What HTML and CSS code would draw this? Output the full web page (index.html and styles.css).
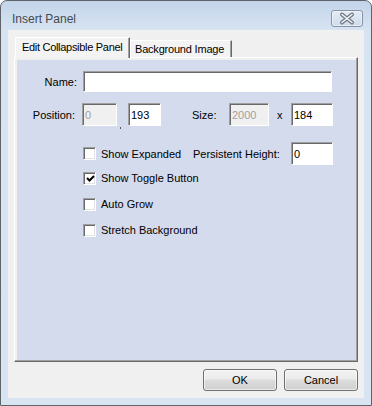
FILE: index.html
```html
<!DOCTYPE html>
<html lang="en">
<head>
  <meta charset="UTF-8">
  <title>Insert Panel</title>
  <link rel="stylesheet" href="styles.css">
</head>
<body>

  <div class="window">
    <div class="titlebar">
      <span class="title">Insert Panel</span>
      <button class="close" title="Close">
        <svg width="30" height="15" viewBox="0 0 30 15">
          <path d="M10 3.5 L20 11.5 M20 3.5 L10 11.5" stroke="#6e7785" stroke-width="4" stroke-linecap="round"/>
          <path d="M10 3.5 L20 11.5 M20 3.5 L10 11.5" stroke="#f4f6f9" stroke-width="1.6" stroke-linecap="round"/>
        </svg>
      </button>
    </div>

    <div class="client">
      <div class="tabs">
        <div class="tab active">Edit Collapsible Panel</div>
        <div class="tab">Background Image</div>
      </div>

      <div class="panel">
        <div class="row row-name">
          <label class="lbl">Name:</label>
          <input class="field name" type="text">
        </div>

        <div class="row row-pos">
          <label class="lbl lbl-pos">Position:</label>
          <input class="field pos-x" type="text" value="0" disabled>
          <span class="tick"></span>
          <input class="field pos-y" type="text" value="193">
          <label class="size-lbl">Size:</label>
          <input class="field size-w" type="text" value="2000" disabled>
          <span class="times">x</span>
          <input class="field size-h" type="text" value="184">
        </div>

        <div class="row row-check first">
          <span class="check"></span>
          <span class="check-lbl expanded">Show Expanded</span>
          <label class="persist-lbl">Persistent Height:</label>
          <input class="field persist" type="text" value="0">
        </div>

        <div class="row row-check">
          <span class="check on">
            <svg width="9" height="9" viewBox="0 0 9 9"><path d="M1 4 L3.5 6.5 L8 2" stroke="#000" stroke-width="2" fill="none"/></svg>
          </span>
          <span class="check-lbl">Show Toggle Button</span>
        </div>

        <div class="row row-check">
          <span class="check"></span>
          <span class="check-lbl">Auto Grow</span>
        </div>

        <div class="row row-check">
          <span class="check"></span>
          <span class="check-lbl">Stretch Background</span>
        </div>
      </div>

      <div class="actions">
        <button class="btn">OK</button>
        <button class="btn">Cancel</button>
      </div>
    </div>
  </div>

</body>
</html>
```

FILE: styles.css
```css
:root {
  --frame: #d8e4f2;
  --face: #f0f0f0;
  --lavanda: #d4dbed;
  --texto: #000000;
}
body {
  margin: 0;
  padding: 0;
  font-family: "Liberation Sans", Arial, sans-serif;
  font-size: 11px;
  color: var(--texto);
}
.window {
  width: 372px;
  height: 406px;
  box-sizing: border-box;
  border: 1px solid #5f646b;
  border-radius: 7px 7px 0 0;
  background: linear-gradient(#c3d5ea, #d6e3f1 28px, var(--frame));
  padding: 0 7px 7px;
  display: flex;
  flex-direction: column;
}
.titlebar {
  height: 29px;
  box-sizing: border-box;
  padding: 6px 1px 0 4px;
  display: flex;
  align-items: center;
  justify-content: space-between;
}
.title {
  font-size: 12px;
  color: #454a52;
}
.close {
  width: 32px;
  height: 17px;
  padding: 0;
  border: 1px solid #8894a6;
  border-radius: 3px;
  background: linear-gradient(#e3ebf5, #d0dcea);
  box-shadow: inset 0 0 0 1px rgba(255, 255, 255, 0.45);
  display: flex;
  align-items: center;
  justify-content: center;
}
.client {
  flex: 1;
  background-color: var(--face);
  padding: 7px 6px 7px;
  display: flex;
  flex-direction: column;
}
.tabs {
  height: 20px;
  display: flex;
  align-items: flex-end;
  padding-left: 1px;
}
.tab {
  box-sizing: border-box;
  height: 17px;
  padding: 0 0 0 4px;
  line-height: 17px;
  white-space: nowrap;
  overflow: hidden;
  letter-spacing: -0.2px;
  background-color: #f3f3f3;
  border-top: 1px solid #ffffff;
  border-left: 1px solid #ffffff;
  border-right: 1px solid #696969;
  box-shadow: inset -1px 0 0 #a0a0a0;
  width: 102px;
}
.tab.active {
  height: 21px;
  width: 115px;
  margin-bottom: -1px;
  padding: 0 0 0 6px;
  line-height: 18px;
  letter-spacing: -0.3px;
  position: relative;
  z-index: 1;
}
.panel {
  height: 305px;
  box-sizing: border-box;
  background-color: var(--lavanda);
  border-top: 1px solid #ffffff;
  border-left: 1px solid #ffffff;
  border-right: 1px solid #696969;
  border-bottom: 1px solid #696969;
  box-shadow: inset -1px -1px 0 #a0a0a0, inset 2px 2px 0 var(--face);
}
.row {
  display: flex;
  align-items: center;
}
.row-name {
  margin-top: 13px;
  height: 21px;
}
.row-pos {
  margin-top: 11px;
  height: 23px;
}
.row-check {
  height: 26px;
}
.row-check.first {
  margin-top: 16px;
  height: 23px;
}
.lbl {
  width: 62px;
  text-align: right;
  margin-right: 6px;
}
.lbl-pos {
  width: 60px;
  margin-right: 6px;
}
.field {
  box-sizing: border-box;
  height: 100%;
  margin: 0;
  padding: 1px 2px 0;
  font-family: "Liberation Sans", Arial, sans-serif;
  font-size: 11px;
  color: #000;
  background-color: #ffffff;
  border: 1px solid;
  border-color: #a0a0a0 #ffffff #ffffff #a0a0a0;
  box-shadow: inset 1px 1px 0 #696969;
  outline: none;
}
.field:disabled {
  background-color: #f0f0f0;
  color: #a0a0a0;
}
.name {
  width: 249px;
}
.pos-x {
  width: 35px;
  margin-left: 1px;
}
.tick {
  width: 1px;
  height: 2px;
  background-color: #555;
  align-self: flex-end;
  margin: 0 7px -3px 3px;
}
.pos-y {
  width: 33px;
}
.size-lbl {
  width: 37px;
  margin-left: 31px;
}
.size-w {
  width: 40px;
}
.times {
  width: 22px;
  box-sizing: border-box;
  padding-left: 8px;
}
.size-h {
  width: 42px;
}
.check {
  width: 13px;
  height: 13px;
  box-sizing: border-box;
  margin-left: 68px;
  margin-right: 5px;
  background-color: #ffffff;
  border: 1px solid;
  border-color: #a0a0a0 #ffffff #ffffff #a0a0a0;
  box-shadow: inset 1px 1px 0 #696969, inset -1px -1px 0 #e3e3e3;
  display: flex;
  align-items: center;
  justify-content: center;
}
.check svg {
  margin: 1px 0 0 1px;
}
.expanded {
  width: 92px;
}
.persist-lbl {
  width: 98px;
}
.persist {
  width: 42px;
}
.actions {
  margin-top: 7px;
  height: 22px;
  display: flex;
  justify-content: flex-end;
  gap: 7px;
}
.btn {
  width: 74px;
  height: 22px;
  margin: 0;
  padding: 0;
  font-family: "Liberation Sans", Arial, sans-serif;
  font-size: 11px;
  color: #000;
  border: 1px solid #707070;
  border-radius: 3px;
  background: linear-gradient(#f2f2f2 0%, #ebebeb 45%, #dddddd 50%, #cfcfcf 100%);
  box-shadow: inset 0 0 0 1px rgba(255, 255, 255, 0.6);
}
```
